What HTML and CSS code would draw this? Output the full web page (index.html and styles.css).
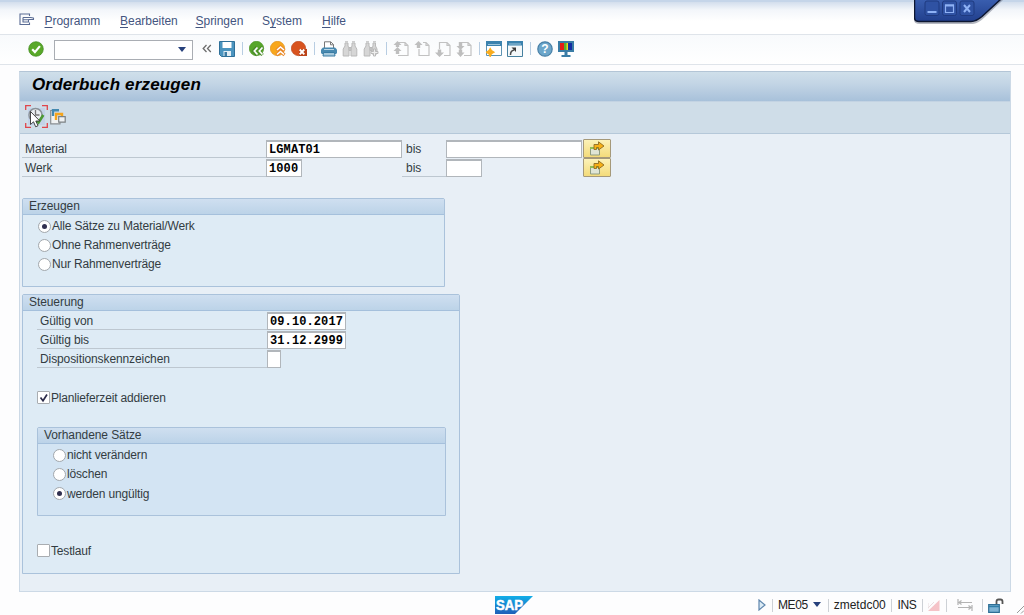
FILE: index.html
```html
<!DOCTYPE html>
<html lang="de">
<head>
    <meta charset="UTF-8">
    <meta name="viewport" content="width=device-width, initial-scale=1.0">
    <title>Orderbuch erzeugen</title>
    <link rel="stylesheet" href="styles.css">
</head>
<body>
    <!-- Menu bar -->
    <nav class="menu-bar">
        <svg class="menu-icon" width="16" height="13" viewBox="0 0 16 13" fill="none" stroke="#5a6c94" stroke-width="1.1">
            <path d="M10.5 3V1H1v10.500h9.500V9.500"/>
            <path d="M4 4.500h7.500l3 .5v1.500H9.500M4 4.500v4.500h5.500V6.700M4.500 6.700h5" stroke-linejoin="round"/>
        </svg>
        <a class="menu-programm"><u>P</u>rogramm</a>
        <a class="menu-bearbeiten"><u>B</u>earbeiten</a>
        <a class="menu-springen"><u>S</u>pringen</a>
        <a class="menu-system">S<u>y</u>stem</a>
        <a><u>H</u>ilfe</a>
    </nav>

    <!-- System toolbar -->
    <div class="toolbar">
        <svg class="enter" width="16" height="16" viewBox="0 0 16 16">
            <circle cx="8" cy="8" r="7.300" fill="#59a829" stroke="#3f8a1c" stroke-width=".7"/>
            <path d="M4.200 8.300l2.700 2.800 5-6" fill="none" stroke="#fff" stroke-width="2.200"/>
        </svg>
        <div class="command"><span class="arrow-down"></span></div>
        <svg class="chevrons" width="10" height="9" viewBox="0 0 10 9" fill="none" stroke="#6c6c6c" stroke-width="1.300">
            <path d="M4.500 1L1.200 4.500l3.300 3.500M8.800 1L5.500 4.500 8.800 8"/>
        </svg>
        <div class="icons">
            <svg width="16" height="16" viewBox="0 0 16 16">
                <path d="M.5.500h15v15H2.500l-2-2z" fill="#4b94bf" stroke="#2f7099"/>
                <path d="M3.500 1h9v6h-9z" fill="#fff"/>
                <path d="M4.500 10h7.500v5H4.500z" fill="#e3eef5"/>
                <path d="M5.500 11h2.500v4H5.500z" fill="#3b7ba3"/>
            </svg>
            <span class="sep"></span>
            <svg width="16" height="16" viewBox="0 0 16 16">
                <circle cx="7.500" cy="7.500" r="7.200" fill="#57a629" stroke="#438c1f" stroke-width=".6"/>
                <path d="M8 6L4.500 10 8 14M13.500 6L10 10l3.500 4" fill="none" stroke="#4a8a2a" stroke-width="3.400"/>
                <path d="M8.500 6.500L5.300 10l3.200 3.500M13.500 6.500L10.300 10l3.200 3.500" fill="none" stroke="#fff" stroke-width="1.700"/>
            </svg>
            <svg width="16" height="16" viewBox="0 0 16 16">
                <circle cx="7.500" cy="7.500" r="7.200" fill="#f8a71d" stroke="#dc8a14" stroke-width=".6"/>
                <path d="M6.500 9.500l4-3.500 4 3.500M6.500 14l4-3.500 4 3.500" fill="none" stroke="#e8862a" stroke-width="3.200"/>
                <path d="M7 9l3.500-3L14 9M7 13.500l3.500-3 3.500 3" fill="none" stroke="#fff" stroke-width="1.600"/>
            </svg>
            <svg width="16" height="16" viewBox="0 0 16 16">
                <circle cx="7.500" cy="7.500" r="7.200" fill="#d8531e" stroke="#b54117" stroke-width=".6"/>
                <path d="M8 8h8v7H8z" fill="#ba4319"/>
                <path d="M8.700 8.500l4.600 4.800M13.300 8.500l-4.600 4.800" stroke="#fff" stroke-width="1.900"/>
            </svg>
            <span class="sep"></span>
            <svg width="16" height="16" viewBox="0 0 16 16">
                <path d="M3.500 8V.800h6.200l2.800 2.700V8" fill="#fff" stroke="#777"/>
                <path d="M9.500 1v2.800h3" fill="none" stroke="#777"/>
                <path d="M2 6.500h12l2 2V12l-1 1H1l-1-1V8.500z" fill="#4889b0"/>
                <path d="M3 8.500h10" stroke="#b9d6e6"/>
                <path d="M2.500 11.500h11l.5 3.500H2z" fill="#a6c9dd" stroke="#397ba3"/>
            </svg>
            <!-- Find, find next -->
            <svg width="16" height="16" viewBox="0 0 16 16" fill="#d6d6d6" stroke="#b9b9b9">
                <path d="M3 2h3v3l1 2v8H1.200V8L3 5zM10 2h3v3l1.800 3v7H9V7l1-2zM7 6.500h2v3H7z"/>
                <path d="M3 .800h3M10 .800h3"/>
            </svg>
            <svg width="16" height="16" viewBox="0 0 16 16" fill="#d6d6d6" stroke="#b9b9b9">
                <path d="M3 2h3v3l1 2v8H1.200V8L3 5zM10 2h2.500v3L14 8v5H9V7l1-2zM7 6.500h2v3H7z"/>
                <path d="M3 .800h3M10 .800h3"/>
                <path d="M10.500 8h2v2.500H15v2h-2.500V15h-2v-2.500H8v-2h2.500z" fill="#eee"/>
            </svg>
            <span class="sep"></span>
            <!-- Paging -->
            <svg width="16" height="16" viewBox="0 0 16 16">
                <path d="M5 1.500h7l3 3v10H5M12 1.500v3h3" fill="none" stroke="#c2c2c2" stroke-width="1.200"/>
                <path d="M4.500 0l4 4H6.200v2H2.800V4H.5zM4.500 6l4 4H6.200v3H2.800v-3H.5z" fill="#bebebe"/>
            </svg>
            <svg width="16" height="16" viewBox="0 0 16 16">
                <path d="M9 1.500h3l3 3v10H5V8M12 1.500v3h3" fill="none" stroke="#c2c2c2" stroke-width="1.200"/>
                <path d="M4.500 0l4 4H6.200v3H2.800V4H.5z" fill="#bebebe"/>
            </svg>
            <svg width="16" height="16" viewBox="0 0 16 16">
                <path d="M4.500 8V1.500H12l3 3v10H9M12 1.500v3h3" fill="none" stroke="#c2c2c2" stroke-width="1.200"/>
                <path d="M4.500 16l4.500-4.500H6.200V8.500H2.800v3H0z" fill="#bebebe"/>
            </svg>
            <svg width="16" height="16" viewBox="0 0 16 16">
                <path d="M5 1.500h7l3 3v10H8M12 1.500v3h3" fill="none" stroke="#c2c2c2" stroke-width="1.200"/>
                <path d="M4.500 9l4-4H6.200V1H2.800v4H.5zM4.500 16l4-4.500H6.200V8.500H2.800v3H.5z" fill="#bebebe"/>
            </svg>
            <span class="sep"></span>
            <!-- New session, shortcut -->
            <svg width="16" height="16" viewBox="0 0 16 16">
                <path d="M.5.500h15v14H.5z" fill="#fff" stroke="#5d93b3"/>
                <path d="M0 0h16v5H0z" fill="#3b82ae"/>
                <path d="M2 3.500h12" stroke="#9cc4da"/>
                <path d="M4.200 7.500l1.200 2 2.600 1.800-2.600 1.500-1.200 2.700L3 12.800.2 11.300 3 9.500z" fill="#f9ad1f" stroke="#f9ad1f" stroke-width="1.300"/>
            </svg>
            <svg width="16" height="16" viewBox="0 0 16 16">
                <path d="M.5.500h15v15H.5z" fill="#f4f8fa" stroke="#46809f"/>
                <path d="M0 0h16v4.500H0z" fill="#3b82ae"/>
                <path d="M2 3h12" stroke="#9cc4da"/>
                <path d="M3.500 14c0-3 1-4.500 3.500-5" fill="none" stroke="#4a4a4a" stroke-width="1.500"/>
                <path d="M4.500 6.500H9V11z" fill="#3a3a3a"/>
            </svg>
            <span class="sep"></span>
            <svg width="16" height="16" viewBox="0 0 16 16">
                <circle cx="8" cy="8" r="7.200" fill="#6ca6ca" stroke="#477fa6" stroke-width="1.200"/>
                <text x="8" y="12.200" class="question">?</text>
            </svg>
            <svg width="16" height="16" viewBox="0 0 16 16">
                <path d="M0 0h16v11H0z" fill="#397ca6"/>
                <path d="M2 2h4v7H2z" fill="#e51c16"/>
                <path d="M6 2h4v7H6z" fill="#56b02d"/>
                <path d="M10 2h4v7h-4z" fill="#142ea2"/>
                <path d="M8.500 2h1.500v7H8.500z" fill="#e9d72a"/>
                <path d="M6.500 11h3v3h3v2h-9v-2h3z" fill="#397ca6"/>
            </svg>
        </div>
    </div>

    <!-- Screen -->
    <main class="screen">
        <h1 class="title">Orderbuch erzeugen</h1>
        <div class="app-toolbar">
            <svg width="23" height="23" viewBox="0 0 23 23">
                <path d="M3 3h17v17H3z" fill="#c3d2e8"/>
                <circle cx="10.500" cy="10" r="6.500" fill="#e9edf0" stroke="#8b9298" stroke-width="1.500"/>
                <path d="M10.500 5v5h4" fill="none" stroke="#777" stroke-width="1.300"/>
                <path d="M10.500 14l3 3.500 4.800-7.500" fill="none" stroke="#4d9a35" stroke-width="2.600"/>
                <path d="M.7 5V.700H6M17 .700h5.300V5M.7 18v4.300H6M17 22.300h5.300V18" fill="none" stroke="#e0454b" stroke-width="1.300"/>
                <path d="M5.500 6.500v13l3-2.700 2.200 5 2.300-1.100-2.200-4.700h4z" fill="#fff" stroke="#333" stroke-width=".9"/>
            </svg>
            <svg width="16" height="16" viewBox="0 0 16 16">
                <path d="M3 1.500H.7v13.300H10V12" fill="#f0f2f3" stroke="#8a8f92" stroke-width="1.200"/>
                <path d="M3 7V1.200h6" fill="none" stroke="#4489b0" stroke-width="2.400"/>
                <path d="M6 11V5h6v2" fill="none" stroke="#f5a51c" stroke-width="2.400"/>
                <path d="M8.700 7.700h6.500v5.500H8.700z" fill="#eef1f3" stroke="#7b8083" stroke-width="1.200"/>
            </svg>
        </div>

        <div class="content">
            <!-- Selection -->
            <div class="row">
                <label class="label">Material</label>
                <span class="field wide">LGMAT01</span>
                <span class="to">bis</span>
                <span class="field wide"></span>
                <button class="multi">
                    <svg width="16" height="15" viewBox="0 0 16 15">
                        <path d="M1.500 6.500h9v7.500h-9z" fill="#dfe5d5" stroke="#8f9d80"/>
                        <path d="M1 6h10v2H1z" fill="#8fbd55"/>
                        <path d="M5 8.500V3.500h4.500V.800l5.500 4.200-5.500 4V6.500H7.500v2z" fill="#f7b016" stroke="#8f6c22" stroke-width=".9"/>
                    </svg>
                </button>
            </div>
            <div class="row">
                <label class="label">Werk</label>
                <span class="field plant">1000</span>
                <span class="to lined">bis</span>
                <span class="field plant"></span>
                <button class="multi">
                    <svg width="16" height="15" viewBox="0 0 16 15">
                        <path d="M1.500 6.500h9v7.500h-9z" fill="#dfe5d5" stroke="#8f9d80"/>
                        <path d="M1 6h10v2H1z" fill="#8fbd55"/>
                        <path d="M5 8.500V3.500h4.500V.800l5.500 4.200-5.500 4V6.500H7.500v2z" fill="#f7b016" stroke="#8f6c22" stroke-width=".9"/>
                    </svg>
                </button>
            </div>

            <section class="group create">
                <h2>Erzeugen</h2>
                <div class="option"><span class="radio checked"></span>Alle Sätze zu Material/Werk</div>
                <div class="option"><span class="radio"></span>Ohne Rahmenverträge</div>
                <div class="option"><span class="radio"></span>Nur Rahmenverträge</div>
            </section>

            <section class="group control">
                <h2>Steuerung</h2>
                <div class="row">
                    <label class="label">Gültig von</label>
                    <span class="field date">09.10.2017</span>
                </div>
                <div class="row">
                    <label class="label">Gültig bis</label>
                    <span class="field date">31.12.2999</span>
                </div>
                <div class="row">
                    <label class="label">Dispositionskennzeichen</label>
                    <span class="field single"></span>
                </div>
                <div class="option lead-time">
                    <span class="checkbox">
                        <svg width="10" height="10" viewBox="0 0 10 10"><path d="M1.500 4.500L4 7.800l4-6.300" fill="none" stroke="#2b2b4a" stroke-width="1.700"/></svg>
                    </span>Planlieferzeit addieren
                </div>

                <section class="group existing">
                    <h2>Vorhandene Sätze</h2>
                    <div class="option"><span class="radio"></span>nicht verändern</div>
                    <div class="option"><span class="radio"></span>löschen</div>
                    <div class="option"><span class="radio checked"></span>werden ungültig</div>
                </section>

                <div class="option test-run"><span class="checkbox"></span>Testlauf</div>
            </section>
        </div>
    </main>

    <!-- Status bar -->
    <footer class="status-bar">
        <svg class="logo" width="38" height="18" viewBox="0 0 38 18">
            <defs>
                <linearGradient id="sap" x1="0" y1="0" x2="0" y2="1">
                    <stop offset="0" stop-color="#12aee8"/>
                    <stop offset="1" stop-color="#1f5fb8"/>
                </linearGradient>
            </defs>
            <path d="M0 0h38L20 18H0z" fill="url(#sap)"/>
            <text x="1" y="14" textLength="27" lengthAdjust="spacingAndGlyphs">SAP</text>
        </svg>
        <div class="cell play">
            <svg width="8" height="12" viewBox="0 0 8 12"><path d="M1 1l6 5-6 5z" fill="#dcebf5" stroke="#5f86ad" stroke-width="1.200"/></svg>
        </div>
        <div class="cell tcode">ME05<span class="arrow-down"></span></div>
        <div class="cell host">zmetdc00</div>
        <div class="cell mode">INS</div>
        <div class="cell signal">
            <svg width="12" height="11" viewBox="0 0 12 11"><path d="M0 11h11.500V0z" fill="#f5c3c8"/><path d="M0 8.500V3M0 8L6 2" stroke="#eadde0"/></svg>
        </div>
        <div class="cell transfer">
            <svg width="16" height="12" viewBox="0 0 16 12" fill="none" stroke="#b3b3b3" stroke-width="1.200"><path d="M1 0v6M1 3.500h14M4.500 1.500L2 3.500l2.500 2M15 6v6M1 8.500h14M11.500 6.500L14 8.500l-2.500 2"/></svg>
        </div>
        <div class="cell lock">
            <svg width="16" height="15" viewBox="0 0 16 15">
                <path d="M8.500 7V3.500q0-2 2-2h2q2 0 2 2V6" fill="none" stroke="#555" stroke-width="1.800"/>
                <path d="M.7 6.700h10.600v7.600H.7z" fill="#7eb3d3" stroke="#2f6f96" stroke-width="1.200"/>
                <path d="M1 8.500h10" stroke="#2f7ea8" stroke-width="1.500"/>
            </svg>
        </div>
        <svg class="grip" width="7" height="9" viewBox="0 0 7 9" stroke="#9a9a9a"><path d="M0 8l7-7M4 8.500l3-3"/></svg>
    </footer>

    <!-- Window controls overlay -->
    <svg class="window-controls" width="90" height="26" viewBox="0 0 90 26">
        <defs>
            <linearGradient id="tab" x1="0" y1="0" x2="0" y2="1">
                <stop offset="0" stop-color="#3a5fb0"/>
                <stop offset="1" stop-color="#213f8d"/>
            </linearGradient>
        </defs>
        <path d="M0 0h89L71 17q-6 6-12 7H6q-6 0-6-4z" fill="#6b7284" opacity=".5"/>
        <path d="M.5-1H87L68 16.500q-6 5-11 5H5q-4.500 0-4.500-4z" fill="url(#tab)" stroke="#0d1732" stroke-width="1.500"/>
        <g fill="#2f52a3" stroke="#1f3a80">
            <rect x="11" y="1" width="14" height="14.500" rx="2"/>
            <rect x="28.500" y="1" width="14" height="14.500" rx="2"/>
            <rect x="46" y="1" width="14" height="14.500" rx="2"/>
        </g>
        <g fill="none" stroke="#8fb2f5">
            <path d="M13.500 12h9" stroke-width="2"/>
            <path d="M31.500 5h8v7.500h-8z" stroke-width="1.200"/>
            <path d="M31 5.500h9" stroke-width="2"/>
            <path d="M50 5l6 7M56 5l-6 7" stroke-width="2"/>
        </g>
    </svg>
</body>
</html>
```

FILE: styles.css
```css
/* General styles */
* {
    box-sizing: border-box;
}

body {
    margin: 0;
    width: 1024px;
    height: 615px;
    overflow: hidden;
    display: flex;
    flex-direction: column;
    position: relative;
    background: #fdfdfe;
    color: #333c42;
    font-family: 'Liberation Sans', Arial, sans-serif;
    font-size: 12px;
    line-height: 14px;
}

svg {
    display: block;
    flex: none;
}

.arrow-down {
    border: 4.5px solid transparent;
    border-top: 5px solid #27417c;
    border-bottom: none;
}

/* Menu bar */
.menu-bar {
    height: 35px;
    flex: none;
    display: flex;
    align-items: center;
    padding: 6px 0 0 19px;
    border-top: 2px solid #c5d5e9;
    border-bottom: 1px solid #dfe4ea;
    background: linear-gradient(#d3deed, #f3f6fa 25%, #fff 60%);
    color: #44557f;
}

.menu-icon {
    margin-right: 9.5px;
    margin-top: -3px;
}

.menu-bar a {
    letter-spacing: -0.03px;
}

.menu-bar u {
    text-underline-offset: 2px;
}

.menu-programm,
.menu-bearbeiten,
.menu-springen,
.menu-system {
    width: 75.5px;
}

.menu-springen {
    width: 66.5px;
}

.menu-system {
    width: 60px;
}

/* System toolbar */
.toolbar {
    height: 30px;
    flex: none;
    display: flex;
    align-items: center;
    padding: 0 0 2px 28px;
    border-bottom: 1px solid #dfe4ea;
    background: linear-gradient(#f8fafc, #fff);
}

.command {
    width: 139px;
    height: 20px;
    margin: 2px 9px 0 10px;
    display: flex;
    align-items: center;
    justify-content: flex-end;
    padding-right: 6px;
    border: 1px solid #a9adb3;
    background: #fff;
}

.chevrons {
    margin-right: 7px;
}

.icons {
    display: flex;
    align-items: center;
    gap: 5px;
}

.sep {
    width: 1px;
    height: 13px;
    margin: 0 1px 0 2px;
    background: #b8cde2;
}

.question {
    fill: #fff;
    font-size: 12px;
    font-weight: bold;
    text-anchor: middle;
}

/* Screen */
.screen {
    width: 992px;
    height: 521px;
    flex: none;
    margin: 6px 0 0 19px;
    display: flex;
    flex-direction: column;
    border: 1px solid #ccd9e6;
    border-top-color: #b3c5d6;
    background: #e8eff6;
}

.title {
    height: 30px;
    margin: 0;
    padding: 2px 0 0 12px;
    border-bottom: 1px solid #c3d3e3;
    background: linear-gradient(#cfdfea, #c3d5e5 40%, #a8c1da);
    color: #000;
    font-size: 17px;
    font-style: italic;
    line-height: 21px;
    letter-spacing: 0.15px;
}

.app-toolbar {
    height: 32px;
    display: flex;
    align-items: center;
    gap: 2px;
    padding: 0 0 2px 5px;
    border-bottom: 1px solid #b5c8d9;
    background: #cfdde8;
}

.content {
    flex: 1;
    padding: 5px 0 0 2px;
}

/* Form rows */
.row {
    height: 19.2px;
    display: flex;
    align-items: flex-end;
}

.label {
    width: 244px;
    height: 18px;
    padding: 2px 0 0 3px;
    border-bottom: 1px solid #bdc7d0;
    letter-spacing: -0.1px;
}

.field {
    height: 18px;
    padding: 1px 0 0 2px;
    border: 1px solid #b1b6bb;
    border-top-width: 2px;
    background: #fff;
    color: #000;
    font-family: 'Liberation Mono', monospace;
    font-size: 12px;
    font-weight: bold;
    letter-spacing: 0.1px;
}

.wide {
    width: 136px;
}

.plant {
    width: 36px;
}

.date {
    width: 79px;
}

.single {
    width: 14px;
}

.to {
    width: 44px;
    height: 18px;
    padding: 2px 0 0 4px;
}

.lined {
    margin-left: 100px;
    border-bottom: 1px solid #bdc7d0;
}

.multi {
    width: 28px;
    height: 19px;
    margin-left: 1px;
    padding: 0 0 0 5px;
    border: 1px solid #a5997a;
    border-radius: 1px;
    background: linear-gradient(#fcf2b8, #f4db7a);
}

.plant + .multi {
    margin-left: 101px;
}

/* Group boxes */
.group {
    border: 1px solid #aac2db;
    border-radius: 2px 2px 0 0;
    background: #deebf5;
}

.group h2 {
    height: 16px;
    margin: 0;
    padding: 0 0 0 6px;
    border-bottom: 1px solid #a5c0dc;
    background: linear-gradient(#cfdff0, #bcd3e8);
    font-size: 12px;
    font-weight: normal;
    line-height: 15px;
    letter-spacing: -0.08px;
}

.create {
    width: 423px;
    height: 89px;
    margin-top: 20.6px;
}

.create h2,
.existing h2 {
    margin-bottom: 1.5px;
}

.control {
    width: 438px;
    height: 280px;
    margin-top: 6.6px;
}

.control .row {
    padding-left: 14px;
}

.control .label {
    width: 230px;
    padding-left: 3px;
}

.option {
    height: 19.2px;
    display: flex;
    align-items: center;
    padding-left: 15px;
    letter-spacing: -0.17px;
}

.radio {
    width: 13px;
    height: 13px;
    margin-right: 1px;
    display: flex;
    align-items: center;
    justify-content: center;
    border: 1px solid #a2a7ac;
    border-radius: 50%;
    background: #fff;
}

.checked::after {
    content: '';
    width: 5px;
    height: 5px;
    border-radius: 50%;
    background: #303050;
}

.checkbox {
    width: 13px;
    height: 13px;
    margin-right: 1px;
    padding: 1px;
    border: 1px solid #a9adb1;
    border-radius: 1px;
    background: #fff;
}

.lead-time {
    margin-top: 20.2px;
    padding-left: 14px;
}

.existing {
    width: 409px;
    height: 89px;
    margin: 19.6px 0 0 14px;
    background: #d3e4f3;
}

.test-run {
    margin-top: 25px;
    padding-left: 14px;
}

/* Status bar */
.status-bar {
    flex: 1;
    display: flex;
    align-items: center;
    padding: 3px 0 0 495px;
    color: #222;
}

.logo text {
    fill: #fff;
    stroke: #fff;
    stroke-width: 0.5px;
    font-size: 14px;
    font-weight: bold;
}

.cell {
    height: 13px;
    display: flex;
    align-items: center;
    padding-left: 5px;
    border-left: 1px solid #cdd1d6;
}

.play {
    width: 20px;
    margin-left: 219px;
    border-left: none;
    padding-left: 6px;
}

.tcode {
    width: 56px;
    letter-spacing: -0.4px;
}

.tcode .arrow-down {
    margin-left: 5px;
    margin-top: -2px;
}

.host {
    width: 64px;
}

.mode {
    width: 31px;
    letter-spacing: -0.3px;
}

.signal {
    width: 24px;
}

.transfer {
    width: 36px;
    padding-left: 10px;
}

.lock {
    width: 35px;
}

.grip {
    margin-top: 8px;
}

/* Window controls */
.window-controls {
    position: absolute;
    top: 0;
    left: 914px;
}
```
